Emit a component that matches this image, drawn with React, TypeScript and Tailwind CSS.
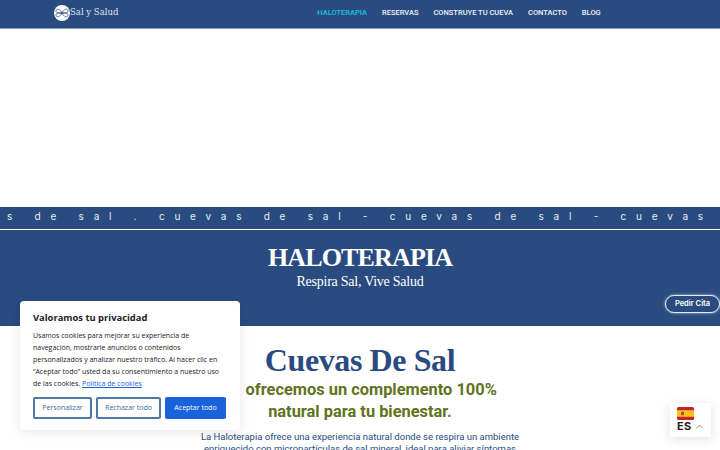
import { ChevronUp } from 'lucide-react'

const navLinks = ['HALOTERAPIA', 'RESERVAS', 'CONSTRUYE TU CUEVA', 'CONTACTO', 'BLOG']

function Logo() {
  return (
    <div className="flex items-center gap-[0px]">
      <svg width="16" height="16" viewBox="0 0 32 32">
        <circle cx="16" cy="16" r="16" fill="#fff" />
        <path
          d="M16 16C13 8 4 6 4 12c0 5 7 4 12 4s12 1 12-4c0-6-9-4-12 4Zm0 0c-3 8-12 10-12 4 0-5 7-4 12-4s12-1 12 4c0 6-9 4-12-4Z"
          fill="none"
          stroke="#2a4b80"
          strokeWidth="1.5"
        />
      </svg>
      <span className="font-['DejaVu_Serif',serif] text-[8.5px] text-[#dfe6f0] whitespace-nowrap">Sal y Salud</span>
    </div>
  )
}

function SpainFlag() {
  return (
    <svg width="17" height="13" viewBox="0 0 17 13">
      <rect width="17" height="13" rx="1.5" fill="#c8202c" />
      <rect y="3.2" width="17" height="6.6" fill="#f5c21b" />
      <rect x="4" y="4.8" width="3" height="3.4" rx="0.8" fill="#b5472b" />
    </svg>
  )
}

export default function App() {
  return (
    <div className="relative h-[450px] w-[720px] overflow-hidden bg-white font-['Roboto',sans-serif]">
      <header className="flex h-[29px] items-center border-b border-[#8aa0c0] bg-[#2a4b80] pb-[3px] pl-[54px]">
        <Logo />
        <nav className="ml-[199px] flex items-center gap-[15px] text-[7.5px] font-medium">
          {navLinks.map((link, i) => (
            <a key={link} className={i === 0 ? 'text-[#19c3e0]' : 'text-[#eef2f7]'}>
              {link}
            </a>
          ))}
        </nav>
      </header>

      <div className="h-[178px]" />

      <div className="flex h-[23px] items-center overflow-hidden whitespace-pre border-b border-white bg-[#2a4b80] pb-[3px] pl-[7px] font-['Inter',sans-serif] text-[10px] tracking-[9.75px] text-[#e6ebf3]">
        s de sal . cuevas de sal - cuevas de sal - cuevas
      </div>

      <section className="relative flex h-[96px] flex-col items-center bg-[#2a4b80] pt-[13px] text-white font-['Liberation_Serif',serif]">
        <h1 className="text-[26px] font-bold leading-[30px] tracking-[-0.85px]">HALOTERAPIA</h1>
        <p className="text-[14px] leading-[17px] tracking-[-0.25px]">Respira Sal, Vive Salud</p>
        <a className="absolute right-0 top-[65px] flex h-[18px] w-[55px] items-center justify-center rounded-full border-[1.5px] border-[#e6ebf3] bg-[#2a4b80] font-['Inter',sans-serif] text-[7.5px] font-semibold shadow-[0_0_3px_rgba(255,255,255,0.7)]">
          Pedir Cita
        </a>
      </section>

      <section className="flex flex-col items-center pt-[14px] text-center">
        <h2 className="font-['Liberation_Serif',serif] text-[32px] font-bold leading-[40px] tracking-[-0.4px] text-[#2a4b80]">Cuevas De Sal</h2>
        <h3 className="mt-[-1px] w-[290px] text-[16.4px] font-bold leading-[22px] text-[#5f7320]">
          <span className="ml-[-5px] mr-[5px]">Te</span> ofrecemos un complemento 100% natural para tu bienestar.
        </h3>
        <p className="mt-[8px] w-[330px] text-[9.5px] leading-[12px] text-[#2a4b80]">
          La Haloterapia ofrece una experiencia natural donde se respira un ambiente enriquecido con micropartículas de sal mineral, ideal para aliviar síntomas
        </p>
      </section>

      <div className="absolute left-[20px] top-[301px] h-[129px] w-[220px] rounded-[4px] bg-white px-[13px] pt-[10px] font-['Open_Sans',sans-serif] shadow-[0_2px_12px_rgba(0,0,0,0.1)]">
        <h4 className="text-[9.4px] font-bold leading-[14px] text-[#212121]">Valoramos tu privacidad</h4>
        <p className="mt-[5px] text-[7px] leading-[12px] text-[#212121]">
          Usamos cookies para mejorar su experiencia de navegación, mostrarle anuncios o contenidos personalizados y analizar nuestro tráfico. Al hacer clic en “Aceptar todo” usted da su consentimiento a nuestro uso de las cookies.{' '}
          <a className="text-[#1863dc] underline">Política de cookies</a>
        </p>
        <div className="mt-[7px] flex gap-[4px] text-[7px]">
          <button className="h-[22px] w-[59px] rounded-[2px] border-2 border-[#4e7aa8] text-[#3b6ba5]">Personalizar</button>
          <button className="h-[22px] w-[65px] rounded-[2px] border-2 border-[#4e7aa8] text-[#3b6ba5]">Rechazar todo</button>
          <button className="h-[22px] w-[61px] rounded-[2px] bg-[#1863dc] text-white">Aceptar todo</button>
        </div>
      </div>

      <div className="absolute left-[670px] top-[403px] flex h-[34px] w-[41px] flex-col items-start bg-white pl-[7px] pt-[4px] shadow-[0_2px_10px_rgba(0,0,0,0.12)]">
        <SpainFlag />
        <div className="flex items-center gap-[3px] font-['Inter',sans-serif] text-[11px] font-bold leading-[12px] tracking-[0.3px] text-[#222]">
          ES
          <ChevronUp size={11} strokeWidth={1.5} className="text-[#555]" />
        </div>
      </div>
    </div>
  )
}
